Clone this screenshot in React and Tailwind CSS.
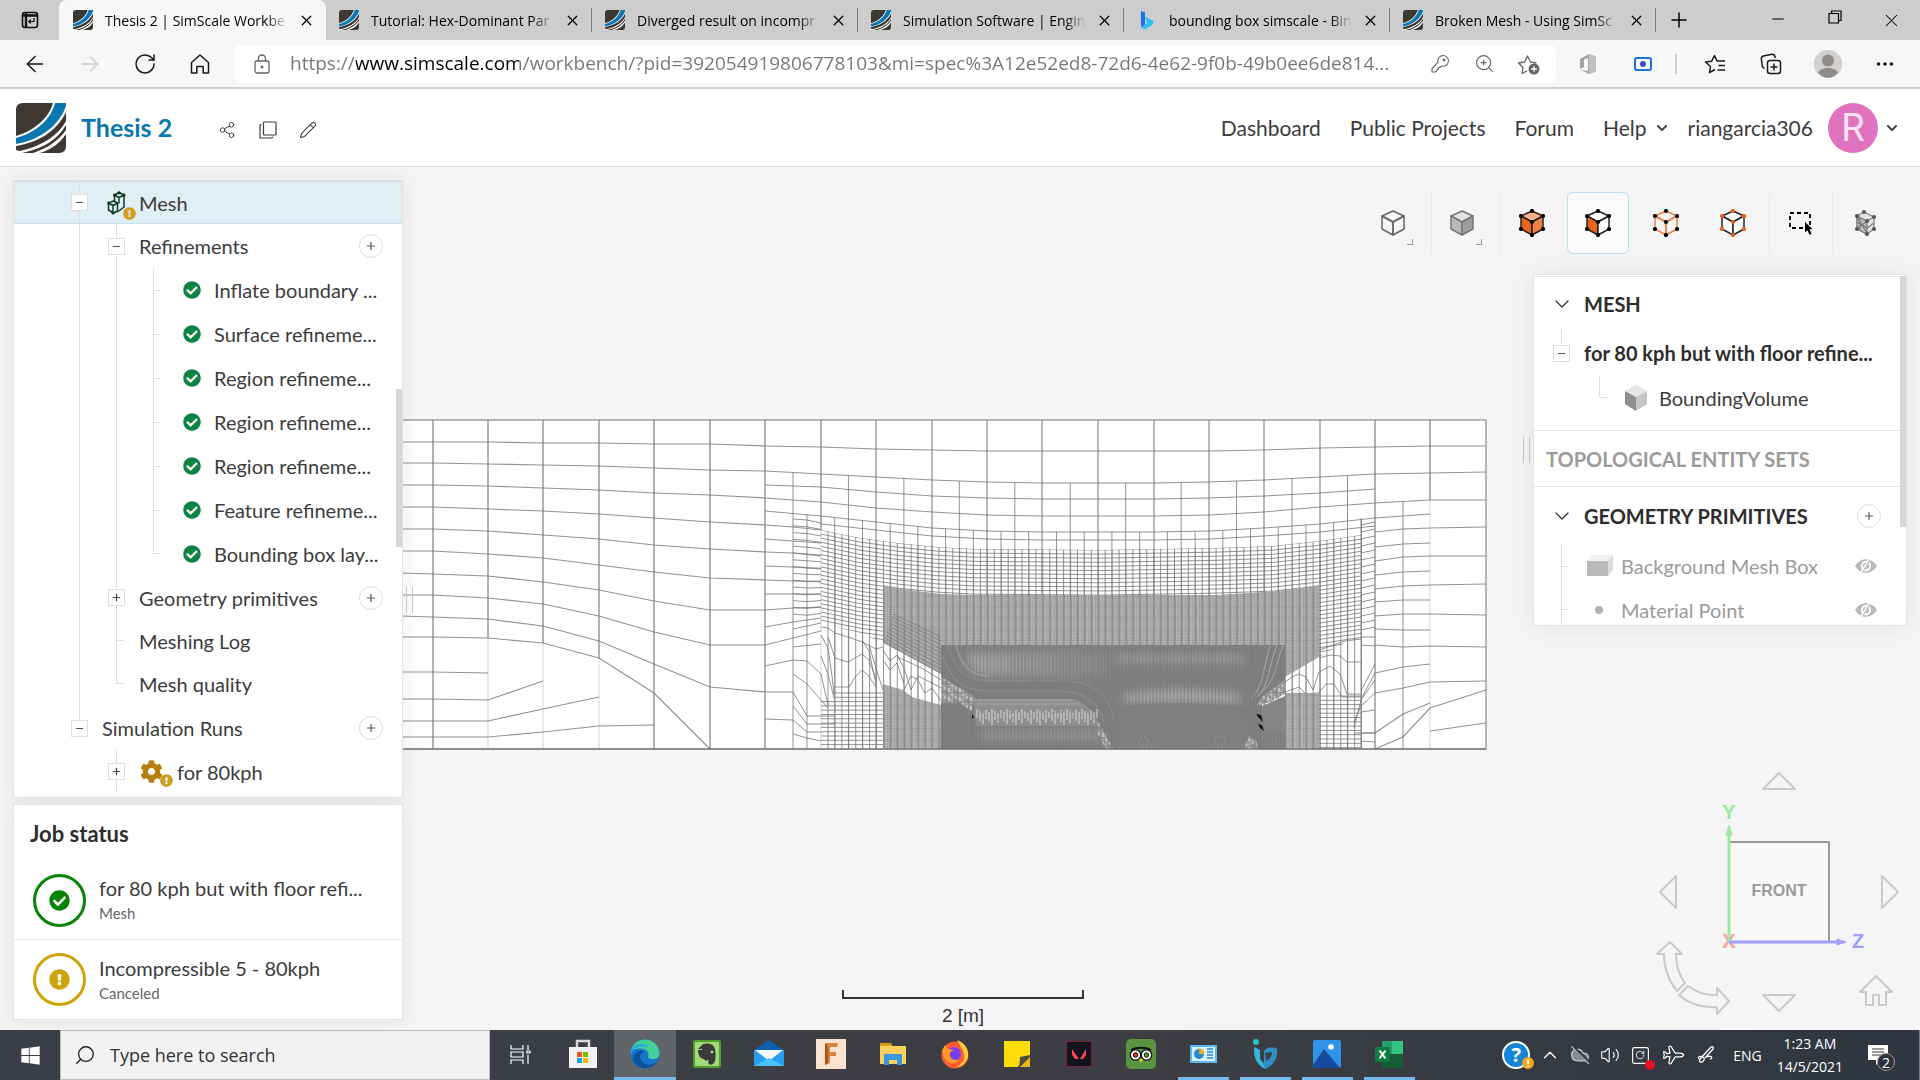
import React from 'react';
import {
    ArrowLeft, ArrowRight, RotateCw, X, Plus, Minus, ZoomIn, Square, Pencil, Share2,
    ChevronDown, ChevronUp, Ellipsis, Plane, Search, Volume2, CloudOff,
} from 'lucide-react';
import { FaCog, FaCheckCircle, FaExclamationCircle, FaWindows, FaChevronDown } from 'react-icons/fa';

/* ---------- Shared logo ---------- */

const SimScaleLogo = ({ className }) => (
    <svg viewBox="0 0 50 50" preserveAspectRatio="none" className={className} aria-hidden="true">
        <path d="M7 0H50V43Q50 50 43 50H0V7Q0 0 7 0Z" fill="#fff" />
        <path d="M7 0H37C33 14 20 27 0 33V7Q0 0 7 0Z" fill="#3e3833" />
        <path d="M39 0H50V3C44 21 25 37 0 41V35C21 29 35 16 39 0Z" fill="#0a78b0" />
        <path d="M50 9V18C42 33 24 44 3 48L0 47V43C23 39 41 28 50 9Z" fill="#3e3833" />
        <path d="M50 22V27C42 38 32 45 17 50H6C24 46 40 39 50 22Z" fill="#3e3833" />
        <path d="M50 31V43Q50 50 43 50H24C36 46 43 41 50 31Z" fill="#3e3833" />
    </svg>
);

const BingLogo = () => (
    <svg viewBox="0 0 20 20" className="h-5 w-5 shrink-0" aria-hidden="true">
        <path d="M4 1l4 1.500v12l-4 3z" fill="#1b6ff2" />
        <path d="M8 7l8 3.500c1 3-1 5-3 6l-5 3-4-2 6-4z" fill="#2cc0f5" />
    </svg>
);

/* ---------- Browser ---------- */

const TABS = [
    { title: 'Thesis 2 | SimScale Workbe', active: true },
    { title: 'Tutorial: Hex-Dominant Par' },
    { title: 'Diverged result on incompr' },
    { title: 'Simulation Software | Engin' },
    { title: 'bounding box simscale - Bin', bing: true },
    { title: 'Broken Mesh - Using SimSc' },
];

const Tab = ({ title, active, bing }) => (
    <div className={active
        ? 'flex h-10 w-[267px] items-center rounded-t-lg bg-[#f7f7f7] pr-2 pl-[14px]'
        : 'flex h-10 w-[266px] items-center pl-[13px]'}>
        {bing ? <BingLogo /> : <SimScaleLogo className="h-5 w-5 shrink-0" />}
        <span className="ml-3 w-[187px] overflow-hidden text-[14px] whitespace-nowrap text-black [mask-image:linear-gradient(90deg,#000_86%,transparent_98%)]">{title}</span>
        <button aria-label="Close tab" className="ml-1 flex w-5 shrink-0 justify-center"><X size={17} strokeWidth={1.8} /></button>
        {!active && <span className="ml-auto h-6 w-px bg-[#7d7d7d]" />}
    </div>
);

const TabBar = () => (
    <div className="flex h-10 items-center bg-[#cdcdcd]">
        <button aria-label="Tab actions" className="flex w-[59px] justify-center">
            <svg viewBox="0 0 18 18" className="h-[18px] w-[18px]" fill="none" stroke="#111" strokeWidth="1.600">
                <rect x="1.500" y="1.500" width="15" height="15" rx="2.500" />
                <path d="M2 4.500h14M5 2v14" strokeWidth="2.400" />
                <path d="M13 7v3.500H8M9.800 8.500l-2 2 2 2" strokeWidth="1.200" />
            </svg>
        </button>
        {TABS.map((t) => <Tab key={t.title} {...t} />)}
        <button aria-label="New tab" className="ml-[11px]"><Plus size={24} strokeWidth={1.5} /></button>
        <div className="ml-auto flex">
            <button aria-label="Minimize" className="flex w-[57px] justify-center"><Minus size={18} strokeWidth={1.5} /></button>
            <button aria-label="Restore" className="flex w-[57px] justify-center">
                <svg viewBox="0 0 14 14" className="h-[14px] w-[14px]" fill="none" stroke="#000" strokeWidth="1.200">
                    <path d="M1 3.500h9.500V13H1zM3.500 3.500V1H13v9.500h-2.500" />
                </svg>
            </button>
            <button aria-label="Close" className="flex w-[57px] justify-center"><X size={21} strokeWidth={1.2} /></button>
        </div>
    </div>
);

const AddressBar = () => (
    <div className="flex h-[49px] items-center border-b-2 border-[#cfcfcf] bg-[#f7f7f7] pr-2 pl-[7px] text-[#1a1a1a]">
        <button aria-label="Back" className="flex w-[55px] justify-center"><ArrowLeft size={26} strokeWidth={1.4} /></button>
        <button aria-label="Forward" className="flex w-[55px] justify-center text-[#cfcfcf]"><ArrowRight size={26} strokeWidth={1.4} /></button>
        <button aria-label="Refresh" className="flex w-[55px] justify-center"><RotateCw size={24} strokeWidth={1.5} /></button>
        <button aria-label="Home" className="flex w-[55px] justify-center">
            <svg viewBox="0 0 20 20" className="h-5 w-5" fill="none" stroke="currentColor" strokeWidth="1.500" strokeLinejoin="round">
                <path d="M1.500 8.500L10 1l8.500 7.500V19h-5.300v-6.500H6.800V19H1.500z" />
            </svg>
        </button>
        <div className="ml-2 flex h-[38px] min-w-0 flex-1 items-center rounded-md bg-white pl-[19px] text-[#666]">
            <svg viewBox="0 0 16 20" className="h-5 w-4 shrink-0" fill="none" stroke="currentColor" strokeWidth="1.300">
                <rect x="1" y="7" width="14" height="12" rx="2" />
                <path d="M4.500 7V4.500a3.500 3.500 0 017 0V7" />
                <circle cx="8" cy="13" r=".8" fill="currentColor" />
            </svg>
            <input
                aria-label="Address"
                className="ml-5 min-w-0 flex-1 bg-[linear-gradient(90deg,#767676_66px,#000_66px,#000_229px,#767676_229px)] bg-clip-text text-[19px] text-transparent outline-none"
                defaultValue="https://www.simscale.com/workbench/?pid=392054919806778103&mi=spec%3A12e52ed8-72d6-4e62-9f0b-49b0ee6de814..."
            />
            <button aria-label="Saved passwords" className="flex w-[44px] justify-center">
                <svg viewBox="0 0 18 18" className="h-[18px] w-[18px]" fill="none" stroke="currentColor" strokeWidth="1.100" strokeLinejoin="round">
                    <path d="M7 7.200A5.300 5.300 0 1110.800 11L9 12.500H7.500V14H6v1.500L4.500 17H1v-3.500z" />
                    <circle cx="13" cy="5" r="1" />
                </svg>
            </button>
            <button aria-label="Zoom" className="flex w-[44px] justify-center"><ZoomIn size={21} strokeWidth={1.3} /></button>
            <button aria-label="Add to favorites" className="flex w-[46px] justify-center">
                <svg viewBox="0 0 24 24" className="h-6 w-6" fill="none" stroke="currentColor" strokeWidth="1.300" strokeLinejoin="round">
                    <path d="M10 19l-5 2.500 1-6-4.500-4.500 6.200-1L10.500 4l3 6 6 1" />
                    <circle cx="17" cy="17" r="5.500" fill="#666" stroke="none" />
                    <path d="M17 14.200v5.600M14.200 17h5.600" stroke="#fff" />
                </svg>
            </button>
            <span className="w-1" />
        </div>
        <button aria-label="Office" className="ml-1 flex w-[55px] justify-center">
            <svg viewBox="0 0 18 22" className="h-[22px] w-[18px]">
                <path d="M1 6l9-5 7 2.500v15L10 21l-8-4 7 1V5L5 6.500V14l-4 2z" fill="#a3a3a3" />
                <path d="M10 1l7 2.500v15L10 21z" fill="#c0c0c0" />
            </svg>
        </button>
        <button aria-label="Extension" className="flex w-[55px] justify-center">
            <span className="flex h-[14px] w-[18px] items-center justify-center rounded-[3px] border-2 border-[#1473e6] bg-white"><span className="h-[6px] w-[6px] rounded-full bg-[#3550d8]" /></span>
        </button>
        <span className="mr-[9px] ml-[5px] h-5 w-[2px] bg-[#cfcfcf]" />
        <button aria-label="Favorites" className="flex w-[57px] justify-center">
            <svg viewBox="0 0 22 20" className="h-5 w-[22px]" fill="none" stroke="currentColor" strokeWidth="1.500" strokeLinejoin="round">
                <path d="M11 15.500l-5.500 3 1-6L1.500 8l6.200-.8L10.500 1.500 13 7h8M14.500 11.500H21M13.500 16H21" />
            </svg>
        </button>
        <button aria-label="Collections" className="flex w-[55px] justify-center">
            <svg viewBox="0 0 22 22" className="h-[22px] w-[22px]" fill="none" stroke="currentColor" strokeWidth="1.500">
                <rect x="7.500" y="7.500" width="13" height="13" rx="2.500" />
                <path d="M14 10.500v7M10.500 14h7M4.500 15.500L2.500 14 1.300 6A3 3 0 013.500 3L12 1.300A3 3 0 0115 3.500l.3 1.500" />
            </svg>
        </button>
        <button aria-label="Profile" className="flex w-[60px] justify-center">
            <svg viewBox="0 0 28 28" className="h-7 w-7">
                <circle cx="14" cy="14" r="14" fill="#d2d0ce" />
                <circle cx="14" cy="10.500" r="6" fill="#8f8b88" />
                <path d="M4 22.500c3-6 17-6 20 0-5 7-15 7-20 0z" fill="#8f8b88" />
            </svg>
        </button>
        <button aria-label="Settings and more" className="flex w-[54px] justify-center"><Ellipsis size={22} /></button>
    </div>
);

/* ---------- Application header ---------- */

const AppHeader = () => (
    <header className="flex h-[78px] items-center border-b border-[#e2e2e2] bg-white pr-[22px] pl-4 text-[21px] text-[#3c3c3c]">
        <SimScaleLogo className="h-[50px] w-[50px]" />
        <h1 className="ml-[15px] w-[127px] text-[25px] font-bold text-[#0877b0]">Thesis 2</h1>
        <div className="mt-1 flex items-center">
            <button aria-label="Share" className="ml-[10px] flex w-[41px] justify-start"><Share2 size={18} strokeWidth={1.3} /></button>
            <button aria-label="Duplicate" className="flex w-[40px] justify-start">
                <svg viewBox="0 0 18 18" className="h-[18px] w-[18px]" fill="none" stroke="currentColor" strokeWidth="1.200">
                    <rect x="4.500" y="1" width="12.500" height="13" rx="1" />
                    <path d="M2.500 3.500L1 4v13h11.500l1.500-1" />
                </svg>
            </button>
            <button aria-label="Rename"><Pencil size={18} strokeWidth={1.4} /></button>
        </div>
        <nav className="ml-auto flex items-center">
            <a href="#dashboard">Dashboard</a>
            <a href="#projects" className="ml-[29px]">Public Projects</a>
            <a href="#forum" className="ml-[29px]">Forum</a>
            <button className="ml-[29px] flex items-center gap-[9px]">Help <FaChevronDown size={12} /></button>
            <button className="ml-5 flex items-center">
                riangarcia306
                <span className="mr-2 ml-[15px] flex h-[50px] w-[50px] items-center justify-center rounded-full bg-[#e072bf] font-['Roboto',sans-serif] text-[38px] leading-none text-[#fbe3f4]">R</span>
                <FaChevronDown size={12} />
            </button>
        </nav>
    </header>
);

/* ---------- Tree panel ---------- */

// Line types of a tree cell: 'full' runs through, 'tick' adds a stub, 'end' stops at the stub
const TreeCell = ({ line, toggle, children }) => (
    <div className="grid h-full w-[37px] shrink-0 place-items-center">
        {line === 'full' && <span className="h-full w-px bg-[#dcdfe0] [grid-area:1/1]" />}
        {line === 'tick' && (
            <span className="flex h-full w-px items-center bg-[#dcdfe0] [grid-area:1/1]"><span className="ml-px h-px w-[7px] shrink-0 bg-[#dcdfe0]" /></span>
        )}
        {line === 'end' && (
            <span className="h-1/2 w-px self-start bg-[#dcdfe0] [grid-area:1/1]"><span className="flex h-full w-2 items-end"><span className="h-px w-2 bg-[#dcdfe0]" /></span></span>
        )}
        {line === 'top' && <span className="h-1/2 w-px self-start bg-[#dcdfe0] [grid-area:1/1]" />}
        {toggle && (
            <button aria-label={toggle === '+' ? 'Expand' : 'Collapse'} className="flex h-[17px] w-[17px] items-center justify-center border border-[#dcdfe0] bg-white text-[#444] [grid-area:1/1]">
                {toggle === '+' ? <Plus size={11} strokeWidth={2.6} /> : <Minus size={11} strokeWidth={2} />}
            </button>
        )}
        {children}
    </div>
);

const AddButton = ({ label }) => (
    <button aria-label={label} className="mr-[19px] ml-auto flex h-6 w-6 items-center justify-center rounded-full border border-[#d9dfe2] text-[#4d5a60]">
        <Plus size={12} strokeWidth={2.4} />
    </button>
);

const MeshIcon = () => (
    <span className="relative [grid-area:1/1]">
        <svg viewBox="0 0 20 24" className="h-6 w-5" fill="none" stroke="#0d3b22" strokeWidth="1.500" strokeLinejoin="round">
            <path d="M1.500 12l5-2 4 2v8l-4 2-5-3zM1.500 12l4.500 2.500 4.500-2.500M6 14.500V22M7.500 10V4L12 1.500 17 4v12l-6.500 5M7.500 4l4.500 2.500L17 4M12 6.500v6" />
            <g fill="#0d3b22" stroke="none"><circle cx="12" cy="1.800" r="1.600" /><circle cx="17" cy="4" r="1.600" /><circle cx="1.700" cy="12" r="1.600" /><circle cx="6" cy="22" r="1.600" /><circle cx="7.500" cy="4" r="1.600" /></g>
        </svg>
        <FaExclamationCircle className="absolute top-4 left-4 text-[#cf9f22]" size={13} />
    </span>
);

const REFINEMENTS = [
    'Inflate boundary ...',
    'Surface refineme...',
    'Region refineme...',
    'Region refineme...',
    'Region refineme...',
    'Feature refineme...',
    'Bounding box lay...',
];

const TreePanel = () => (
    <section className="flex h-[618px] overflow-hidden border border-[#e3e3e3] bg-white text-[20px] shadow-[0_0_20px_rgba(0,0,0,0.08)]">
        <div className="flex min-w-0 flex-1 flex-col">
            <div className="flex h-[43px] shrink-0 items-center border-y border-[#c3e0ec] bg-[#e0eef5] pl-[47px]">
                <TreeCell line="full" toggle="-" />
                <TreeCell><MeshIcon /></TreeCell>
                <span className="ml-1">Mesh</span>
            </div>
            <div className="flex h-11 shrink-0 items-center pl-[47px]">
                <TreeCell line="full" />
                <TreeCell line="full" toggle="-" />
                <span className="ml-1">Refinements</span>
                <AddButton label="Add refinement" />
            </div>
            {REFINEMENTS.map((name, i) => (
                <div key={i} className="flex h-11 shrink-0 items-center pl-[47px] last-of-type:h-[43px]">
                    <TreeCell line="full" />
                    <TreeCell line="full" />
                    <TreeCell line={i === REFINEMENTS.length - 1 ? 'end' : 'tick'} />
                    <FaCheckCircle size={18} className="ml-[11px] shrink-0 text-[#0b8442]" />
                    <span className="ml-[13px] whitespace-nowrap">{name}</span>
                </div>
            ))}
            <div className="flex h-[43px] shrink-0 items-center pl-[47px]">
                <TreeCell line="full" />
                <TreeCell line="full" toggle="+" />
                <span className="ml-1">Geometry primitives</span>
                <AddButton label="Add geometry primitive" />
            </div>
            <div className="flex h-[43px] shrink-0 items-center pl-[47px]">
                <TreeCell line="full" />
                <TreeCell line="tick" />
                <span className="ml-1">Meshing Log</span>
            </div>
            <div className="flex h-11 shrink-0 items-center pl-[47px]">
                <TreeCell line="full" />
                <TreeCell line="end" />
                <span className="ml-1">Mesh quality</span>
            </div>
            <div className="flex h-11 shrink-0 items-center pl-[47px]">
                <TreeCell line="top" toggle="-" />
                <span className="ml-1">Simulation Runs</span>
                <AddButton label="Add simulation run" />
            </div>
            <div className="flex h-[43px] shrink-0 items-center pl-[47px]">
                <TreeCell />
                <TreeCell line="full" toggle="+" />
                <span className="relative ml-[5px] w-[37px]">
                    <FaCog size={23} className="text-[#b57f0e]" />
                    <FaExclamationCircle className="absolute top-[14px] left-5 text-[#cf9f22]" size={13} />
                </span>
                <span>for 80kph</span>
            </div>
        </div>
        <div className="-ml-[6px] w-[6px] pt-[208px]"><div className="h-[158px] bg-[#d6d6d6]" /></div>
    </section>
);

const JOBS = [
    { name: 'for 80 kph but with floor refi...', type: 'Mesh', ok: true },
    { name: 'Incompressible 5 - 80kph', type: 'Canceled', ok: false },
];

const JobStatus = () => (
    <section className="border border-[#e3e3e3] bg-white shadow-[0_0_20px_rgba(0,0,0,0.08)]">
        <h2 className="flex h-14 items-center pl-4 text-[22px] font-bold text-[#2d2d2d]">Job status</h2>
        {JOBS.map((job) => (
            <div key={job.name} className="flex h-[79px] items-center border-b border-[#e6ebed] pl-[19px] last:border-0">
                <span className={job.ok
                    ? 'flex h-[53px] w-[53px] shrink-0 items-center justify-center rounded-full border-[3px] border-[#078407] text-[#078407]'
                    : 'flex h-[53px] w-[53px] shrink-0 items-center justify-center rounded-full border-[3px] border-[#cfa40a] text-[#cfa40a]'}>
                    {job.ok ? <FaCheckCircle size={21} /> : <FaExclamationCircle size={21} />}
                </span>
                <span className="ml-[13px] whitespace-nowrap">
                    <span className="block text-[20px] leading-[26px]">{job.name}</span>
                    <span className="block text-[15px] leading-6 text-[#666]">{job.type}</span>
                </span>
            </div>
        ))}
    </section>
);

/* ---------- View toolbar ---------- */

const CORNERS = [[13, 2], [24, 7], [24, 20], [13, 26], [2, 20], [2, 7], [13, 13]];

const CubeIcon = ({ top = 'none', left = 'none', right = 'none', stroke = '#222', dot }) => (
    <svg viewBox="0 0 26 28" className="h-7 w-[26px]" stroke={stroke} strokeWidth="1.500" strokeLinejoin="round">
        <path d="M13 2L24 7L13 13L2 7Z" fill={top} />
        <path d="M2 7L13 13V26L2 20Z" fill={left} />
        <path d="M24 7L13 13V26L24 20Z" fill={right} />
        {dot && CORNERS.map(([x, y]) => <circle key={`${x}-${y}`} cx={x} cy={y} r="2.100" fill={dot} stroke="none" />)}
    </svg>
);

const CornerMark = () => <span className="absolute right-0 bottom-0 h-[6px] w-[6px] border-r border-b border-[#999]" />;

const ToolDivider = () => <span className="h-[60px] w-px bg-[#e9e9e9]" />;

const ViewToolbar = () => (
    <div className="flex items-center self-end pr-[10px]">
        <button aria-label="Wireframe" className="relative mr-[18px] flex h-[44px] w-[41px] items-center justify-center">
            <CubeIcon stroke="#666" /><CornerMark />
        </button>
        <ToolDivider />
        <button aria-label="Shaded" className="relative mr-[18px] ml-[9px] flex h-[44px] w-[41px] items-center justify-center">
            <CubeIcon top="#e4e4e4" left="#b9b9b9" right="#9d9d9d" stroke="#777" /><CornerMark />
        </button>
        <ToolDivider />
        <button aria-label="Select volumes" className="mr-1 flex h-[62px] w-[62px] items-center justify-center"><CubeIcon top="#fbb088" left="#e8641c" right="#f08046" dot="#000" /></button>
        <button aria-label="Select faces" className="flex h-[62px] w-[62px] items-center justify-center rounded-md border border-[#b9dff3] bg-[#fbfbfb]"><CubeIcon top="#fff" left="#e8641c" right="#fff" dot="#000" /></button>
        <button aria-label="Select edges" className="flex h-[62px] w-[74px] items-center justify-center"><CubeIcon stroke="#ee7f4b" dot="#000" /></button>
        <button aria-label="Select vertices" className="mr-[6px] flex h-[62px] w-[60px] items-center justify-center"><CubeIcon top="#fff" left="#fff" right="#fff" dot="#ec5f17" /></button>
        <ToolDivider />
        <button aria-label="Box selection" className="flex h-[62px] w-[62px] items-center justify-center">
            <svg viewBox="0 0 26 26" className="h-[26px] w-[26px]">
                <path d="M2 3h20v15H2z" fill="none" stroke="#000" strokeWidth="1.800" strokeDasharray="4 3" />
                <path d="M17 12l7.500 7-3 .300 2 4.500-2 1-2-4.500-2.500 2z" />
            </svg>
        </button>
        <ToolDivider />
        <button aria-label="Mesh clip" className="flex h-[62px] w-[64px] items-center justify-center">
            <svg viewBox="0 0 26 28" className="h-7 w-[26px]" stroke="#777" strokeWidth="1.100">
                <path d="M5 7l7-4 10 5v12l-7 5L5 20z" fill="#e2e2e2" />
                <path d="M5 7l10 5v13L5 20z" fill="#bdbdbd" />
                <path d="M15 12l7-4M5 13l10 6 7-5M8 8v14M5 20l10-8M5 8l10 16" fill="none" />
                {[[5, 7], [12, 3], [22, 8], [22, 20], [15, 25], [5, 20], [15, 12]].map(([x, y]) => (
                    <circle key={`${x}-${y}`} cx={x} cy={y} r="2.100" fill="#555" stroke="none" />
                ))}
            </svg>
        </button>
    </div>
);

/* ---------- Scene tree ---------- */

const HiddenEye = ({ label }) => (
    <button aria-label={label} className="mr-[23px] ml-auto">
        <svg viewBox="0 0 22 16" className="h-4 w-[22px]">
            <path d="M0 8C5-1 17-1 22 8C17 17 5 17 0 8Z" fill="#b9b9b9" />
            <circle cx="11" cy="8" r="5.200" fill="#fff" />
            <circle cx="11" cy="8" r="3.300" fill="#b9b9b9" />
            <path d="M6.500 15L15 1" stroke="#fff" strokeWidth="3" />
            <path d="M7.500 14.500L15 2" stroke="#b9b9b9" strokeWidth="1.300" />
        </svg>
    </button>
);

const ScenePanel = () => (
    <section className="flex h-[352px] w-[374px] self-end overflow-hidden border border-[#e3e3e3] bg-white pt-px text-[20px] shadow-[0_0_24px_rgba(0,0,0,0.08)]">
        <div className="flex min-w-0 flex-1 flex-col">
            <h2 className="flex h-[54px] shrink-0 items-center border-t border-[#ececec] font-bold text-[#2d2d2d]">
                <ChevronDown size={24} strokeWidth={1.2} className="mr-[10px] ml-4" />MESH
            </h2>
            <div className="flex h-[46px] shrink-0 items-center pl-[9px] font-bold text-[#2d2d2d]">
                <TreeCell line="top" toggle="-" />
                <span className="ml-1 whitespace-nowrap">for 80 kph but with floor refine...</span>
            </div>
            <div className="mb-[10px] flex h-11 shrink-0 items-center pl-[47px]">
                <TreeCell line="end" />
                <svg viewBox="0 0 22 26" className="ml-[7px] h-[26px] w-[22px]">
                    <path d="M11 0L22 6L11 12L0 6Z" fill="#e6e6e6" />
                    <path d="M0 6L11 12V26L0 19Z" fill="#8f8f8d" />
                    <path d="M22 6L11 12V26L22 19Z" fill="#c6c6c6" />
                </svg>
                <span className="ml-3">BoundingVolume</span>
            </div>
            <h2 className="flex h-[57px] shrink-0 items-center border-y border-[#e3e3e3] pl-3 font-bold text-[#9b9b9b]">TOPOLOGICAL ENTITY SETS</h2>
            <h2 className="flex h-[57px] shrink-0 items-center font-bold text-[#2d2d2d]">
                <ChevronDown size={24} strokeWidth={1.2} className="mr-[10px] ml-4" />GEOMETRY PRIMITIVES
                <AddButton label="Add geometry primitive" />
            </h2>
            <div className="flex h-11 shrink-0 items-center pl-[9px] text-[#9b9b9b]">
                <TreeCell line="tick" />
                <svg viewBox="0 0 26 22" className="ml-[7px] h-[22px] w-[26px]">
                    <path d="M0 6L5 0H26L21 6Z" fill="#f0f0f0" />
                    <path d="M21 6L26 0V15L21 21Z" fill="#dcdcdc" />
                    <path d="M0 6H21V21H0Z" fill="#b9b9b9" />
                </svg>
                <span className="ml-2">Background Mesh Box</span>
                <HiddenEye label="Show Background Mesh Box" />
            </div>
            <div className="flex h-[43px] shrink-0 items-center pl-[9px] text-[#9b9b9b]">
                <TreeCell line="tick" />
                <span className="mr-[18px] ml-[15px] h-2 w-2 rounded-full bg-[#b0b0b0]" />
                <span>Material Point</span>
                <HiddenEye label="Show Material Point" />
            </div>
        </div>
        <div className="w-[6px]"><div className="h-[251px] bg-[#d6d6d6]" /></div>
    </section>
);

/* ---------- Orientation cube ---------- */

const OrientationCube = () => (
    <svg viewBox="0 0 247 260" className="h-[260px] w-[247px] self-end overflow-visible" fill="none" stroke="#c9c9c9" strokeWidth="2" strokeLinejoin="round">
        <path d="M119 3L135 19H103ZM119 241L135 225H103ZM0 122L16 106V138ZM238 122L222 106V138Z" />
        <path d="M10 172L22 184H16C16 196 19 205 25 213L17 221C8 210 4 198 4 184H-3Z" />
        <path d="M28 216C37 223 45 225 57 225V218L69 231L57 244V237C43 238 29 234 19 225Z" />
        <path d="M216 206L232 222H226V235H219V225H213V235H206V222H200Z" />
        <rect x="69" y="72" width="100" height="100" fill="#f9f9f9" stroke="#9a9a9a" />
        <text x="69" y="178" textAnchor="middle" fontSize="20" fontWeight="bold" fill="#ff9d9d" stroke="none" fontFamily="Liberation Sans, sans-serif">X</text>
        <path d="M69 172V62" stroke="#9be89b" strokeWidth="3" />
        <path d="M69 55L72 65H66Z" fill="#9be89b" stroke="#9be89b" strokeWidth="1" />
        <path d="M69 172H178" stroke="#a0a0fb" strokeWidth="3" />
        <path d="M186 172L177 169V175Z" fill="#a0a0fb" stroke="#a0a0fb" strokeWidth="1" />
        <g fontFamily="Liberation Sans, sans-serif" stroke="none" fontWeight="bold" textAnchor="middle">
            <text x="69" y="49" fontSize="20" fill="#9be89b">Y</text>
            <text x="198" y="178" fontSize="20" fill="#a0a0fb">Z</text>
            <text x="119" y="126" fontSize="16" fill="#9a9a9a">FRONT</text>
        </g>
    </svg>
);

/* ---------- Mesh drawing ---------- */

const LEFT_X = [400, 433, 488, 543, 599, 654, 710, 765];
const MID_X = [821, 876, 932, 987, 1042, 1098, 1154, 1209, 1264, 1320, 1375];

const path = (pts) => `M${pts.map((p) => p.join(' ')).join('L')}`;
const zip = (xs, ys) => xs.slice(0, ys.length).map((x, i) => [x, ys[i]]);

// Height of a polyline at a given x
const at = (pts, x) => {
    if (x <= pts[0][0]) return pts[0][1];
    for (let i = 1; i < pts.length; i++) {
        const [x0, y0] = pts[i - 1];
        const [x1, y1] = pts[i];
        if (x <= x1) return y0 + ((y1 - y0) * (x - x0)) / (x1 - x0);
    }
    return pts[pts.length - 1][1];
};

const LEFT_ROWS = [
    [442, 442, 442, 443, 443, 444, 444, 446],
    [463, 463, 464, 465, 466, 468, 470, 471],
    [485, 485, 486, 488, 490, 493, 495, 498],
    [507, 507, 509, 511, 514, 518, 522, 525],
    [529, 529, 531, 535, 539, 545, 549, 552],
    [551, 551, 554, 558, 565, 572, 578, 580],
    [573, 574, 576, 582, 590, 601, 610, 610],
    [595, 595, 598, 604, 616, 632, 645, 645],
    [616, 617, 619, 626, 641, 664, 687, 692],
    [637, 637, 638, 643, 658, 693, 749],
    [672, 672, 673],
    [699, 699, 700, 681],
    [721, 721, 721, 709, 697],
    [737, 737, 737, 732, 726, 725],
];

const ROW_1 = zip([765, ...MID_X, 1430, 1486], [446, 447, 449, 450, 451, 451, 451, 451, 451, 450, 448, 447, 446, 446]);
const ROW_2 = zip([765, ...MID_X, 1430, 1486], [471, 474, 477, 480, 482, 483, 483, 483, 482, 480, 477, 474, 473, 472]);
const ROW_25 = zip([765, ...MID_X], [485, 487, 492, 496, 498, 499, 499, 499, 498, 496, 493, 489]);
const ROW_3 = zip([765, ...MID_X, 1430, 1486], [498, 502, 508, 512, 515, 516, 516, 516, 515, 512, 507, 503, 500, 500]);
const ROW_35 = zip([765, ...MID_X, 1430], [511, 516, 522, 528, 531, 532, 532, 532, 531, 528, 524, 518, 514]);
const FINE_TOP = [[821, 530], [860, 538], [897, 543], [937, 547], [973, 549], [1100, 550], [1217, 548], [1273, 546], [1320, 541], [1361, 535]];
const DENSE_TOP = [[883, 585], [910, 590], [940, 594], [973, 595], [1217, 595], [1250, 593], [1287, 590], [1319, 585]];
const LOW_LEFT = [[821, 623], [860, 633], [883, 643], [910, 657], [941, 674]];
const LOW_RIGHT = [[1285, 677], [1319, 657], [1347, 642], [1361, 638]];

// Rows to the right of the fine region, at x = 1375, 1403, 1430 and for whole rows 1486
const RIGHT_ROWS = [
    [532, 529, 528, 527], [547, 544, 543], [561, 557, 556, 556], [575, 572, 571], [589, 586, 585, 584],
    [602, 600, 600], [616, 614, 614, 615], [629, 630, 630], [645, 647, 646, 647], [673, 667, 664],
    [693, 688, 682, 681], [733, 714, 703], [749, 737, 708, 690],
];

const STRAY = [
    [[765, 539], [793, 541], [821, 543]],
    [[765, 525], [793, 527], [821, 530]],
    [[765, 552], [793, 553], [821, 556]],
    [[765, 566], [793, 567], [821, 569]],
    [[765, 580], [793, 581], [821, 582]],
    [[765, 594], [793, 594], [821, 594]],
    [[765, 610], [793, 608], [821, 607]],
    [[765, 627], [793, 622], [821, 618]],
    [[765, 645], [793, 638], [821, 631]],
    [[765, 666], [793, 660], [807, 661], [821, 674], [828, 705]],
    [[765, 692], [793, 692], [807, 716], [821, 716]],
    [[765, 719], [793, 720], [807, 732], [821, 732]],
    [[793, 629], [821, 623]], [[793, 647], [821, 644]],
    [[793, 674], [807, 684], [828, 708]],
    [[793, 706], [807, 724], [821, 724]],
    [[793, 734], [807, 738], [821, 741]],
    [[821, 627], [828, 628], [835, 633], [848, 637], [862, 642], [876, 649], [883, 647]],
    [[828, 637], [835, 658], [848, 662], [862, 654], [869, 660], [876, 679]],
    [[835, 687], [849, 687], [855, 677], [862, 670], [868, 675], [876, 687]],
    [[821, 635], [828, 648], [832, 676], [834, 694]],
    [[821, 656], [828, 674], [834, 698]],
    [[862, 640], [869, 651], [876, 684]], [[869, 645], [876, 668], [883, 690]],
    [[883, 650], [890, 661], [897, 655], [904, 668], [911, 690], [918, 676], [932, 683], [941, 688]],
    [[883, 660], [890, 670], [897, 663], [904, 684]],
    [[897, 657], [911, 663], [925, 670], [941, 680]],
    [[904, 690], [911, 676], [918, 680], [925, 693], [932, 688], [941, 701]],
    [[1285, 682], [1292, 677], [1299, 674], [1306, 677], [1313, 690], [1319, 672], [1330, 666], [1340, 674], [1347, 694], [1361, 694]],
    [[1285, 692], [1299, 687], [1306, 694], [1319, 693], [1326, 684], [1334, 684], [1342, 697], [1361, 697]],
    [[1319, 658], [1330, 655], [1340, 656], [1347, 662], [1361, 662]],
    [[1319, 650], [1345, 641], [1361, 639]],
    [[1361, 645], [1375, 646]], [[1361, 637], [1375, 637]],
    [[1361, 691], [1375, 664]], [[1361, 699], [1375, 673]], [[1354, 722], [1361, 706], [1375, 693]],
    [[1361, 712], [1375, 710]], [[1354, 733], [1375, 733]], [[1361, 741], [1375, 742]],
    [[1354, 728], [1361, 700], [1375, 680]],
    [[1430, 731], [1486, 723]],
];

const range = (from, to, step) => {
    const out = [];
    for (let v = from; v <= to; v += step) out.push(v);
    return out;
};

const MeshView = () => (
    <svg viewBox="0 167 1920 863" className="absolute inset-0 h-full w-full" fill="none" stroke="#6f6f6f" strokeOpacity="0.750" aria-label="Mesh cross section">
        <defs>
            <pattern id="dense" width="6.930" height="2.200" patternUnits="userSpaceOnUse" x="883">
                <rect width="7" height="3" fill="#b9b9b9" />
                <path d="M0 .5H7" stroke="#a6a6a6" strokeWidth=".8" />
                <path d="M1 0V3" stroke="#777" strokeWidth="1.200" />
                <path d="M4.500 0V3" stroke="#999" />
            </pattern>
            <pattern id="stripes" width="3.460" height="8" patternUnits="userSpaceOnUse">
                <path d="M1 0V8" stroke="#757575" strokeWidth="1.300" />
            </pattern>
            <pattern id="speckle" width="11" height="9" patternUnits="userSpaceOnUse">
                <rect width="11" height="9" fill="#a9a9a9" />
                <path d="M1 0V9M5 0V6M8 2V9M2 3H5M7 7H11" stroke="#7d7d7d" strokeWidth="1" />
                <path d="M3 4V8M6 0V3M10 3V6" stroke="#ededed" />
            </pattern>
            <linearGradient id="cabin" x1="0" x2="1" y1="0" y2="0">
                <stop offset="0" stopColor="#a4a4a4" />
                <stop offset="1" stopColor="#888" />
            </linearGradient>
            <filter id="soft"><feGaussianBlur stdDeviation="4" /></filter>
            <clipPath id="fine">
                <path d={`${path([...FINE_TOP, ...[...LOW_RIGHT].reverse(), ...[...LOW_LEFT].reverse()])}Z`} />
            </clipPath>
            <clipPath id="core"><path d="M941 645H1285V680L1262 700V749H941Z" /></clipPath>
        </defs>

        <rect x="395" y="420" width="1091" height="329" fill="#fff" strokeWidth="1.300" />

        {/* coarse rows and columns */}
        {LEFT_ROWS.map((ys) => <path key={ys.join()} d={path(zip(LEFT_X, ys))} strokeWidth="1.200" />)}
        {[ROW_1, ROW_2, ROW_25, ROW_3, ROW_35].map((row) => <path key={row[0][1]} d={path(row)} />)}
        <path d="M433 420V749M599 420V658M654 420V749M710 420V749M765 420V749" strokeWidth="1.400" />
        <path d="M488 420V638M543 420V643M821 420V530M1430 420V500M1375 420V749" strokeWidth="1.400" />
        <path d="M488 638V749M543 643V749M599 658V749M821 530V749M1430 500V749" strokeOpacity="0.300" />
        {MID_X.slice(1, 10).map((x) => <path key={x} d={`M${x} 420V749`} strokeWidth="1.300" />)}

        {/* refined columns, each level starts at its own row */}
        {range(793, 1350, 55.45).map((x) => <path key={x} d={`M${x} ${at(ROW_2, x)}V749`} />)}
        {range(807, 1362, 27.72).map((x) => <path key={x} d={`M${x} ${at(ROW_35, x)}V749`} />)}
        {range(828, 1361, 13.86).map((x) => <path key={x} d={`M${x} ${at(FINE_TOP, x)}V749`} />)}
        {range(835, 1355, 13.86).map((x) => <path key={x} d={`M${x} ${at(FINE_TOP, x)}V749`} strokeOpacity="0.550" />)}
        <path d="M1361 518V749M1403 501V749" />
        <path d={path(ROW_35.slice(1, 12).map(([x, y]) => [x, y + 8]))} />

        {/* level three rows at both flanks */}
        {range(519, 615, 6.8).map((y) => <path key={y} d={path([[793, y], [807, y + 1], [821, y + 4 - (y - 519) / 20]])} />)}
        {range(525, 632, 7).map((y) => <path key={y} d={path([[1361, y], [1375, y - 3]])} />)}
        {RIGHT_ROWS.map((ys) => <path key={ys.join()} d={path(zip([1375, 1403, 1430, 1486], ys))} strokeWidth="1.200" />)}

        <g clipPath="url(#fine)">
            {range(0, 28, 1).map((i) => <path key={i} d={path(FINE_TOP.map(([x, y]) => [x, y + i * 4.1]))} />)}
        </g>
        {STRAY.map((pts) => <path key={pts.join()} d={path(pts)} />)}

        {/* blocks along the floor */}
        {range(693, 746, 4.3).map((y) => <path key={y} d={`M${y < 700 ? 835 : 821} ${y}H883M1319 ${y + 3}H1361`} />)}
        <path d="M821 716H835M821 724H835M1361 733H1375" />
        <path d="M883 684L903 690L912 697L941 705V749H883Z" fill="url(#dense)" stroke="none" />
        <path d="M1285 693H1319V749H1285Z" fill="url(#dense)" stroke="none" />

        <path d={`${path([...DENSE_TOP, [1319, 657], [1285, 677], [1262, 700], [960, 700], [941, 674], [910, 657], [883, 643]])}Z`} fill="url(#dense)" stroke="none" />
        {range(0, 9, 1).map((i) => (
            <path key={i} d={`M${884 + i} ${641 - i * 3}Q${905 + i * 2} ${655 - i * 3} 941 ${673 - i * 4}`} stroke="#777" />
        ))}

        {/* refined core around the vehicle */}
        <g clipPath="url(#core)" stroke="none">
            <path d="M941 645H1285V749H941Z" fill="#808080" />
            <g filter="url(#soft)">
                <path d="M968 652H1110V676H985C972 674 964 664 968 652Z" fill="url(#cabin)" />
                <rect x="1115" y="655" width="130" height="8" rx="4" fill="#9e9e9e" />
                <path d="M1122 697C1128 688 1236 688 1242 697L1240 702H1124Z" fill="#acacac" />
                <rect x="980" y="731" width="122" height="8" fill="#989898" />
            </g>
            <path d="M941 645H1285V749H941Z" fill="url(#stripes)" fillOpacity=".75" />
            <path d="M941 645C952 678 962 684 985 685H1065C1092 687 1106 700 1110 725" fill="none" stroke="#7c7c7c" strokeWidth="8" />
            <path d="M948 645C956 673 966 680 988 681H1068C1094 683 1108 695 1114 718" fill="none" stroke="#929292" strokeWidth="1" />
            <path d="M943 655C950 682 966 690 985 691H1060C1085 692 1098 702 1104 722" fill="none" stroke="#959595" strokeWidth="1" />
            <path d="M956 645C961 666 970 675 988 676" fill="none" stroke="#a4a4a4" strokeWidth="1.500" />
            <path d="M973 699H1072C1086 702 1094 712 1100 726H976Z" fill="#8f8f8f" />
            {range(0, 40, 1).map((i) => (
                <path key={i} d={`M${977 + i * 3} ${709 + ((i * 7) % 5)}V${718 + ((i * 11) % 8)}`} stroke="#dedede" strokeWidth="1.300" />
            ))}
            {range(0, 28, 1).map((i) => <path key={i} d={`M${980 + i * 4} ${711 + ((i * 5) % 11)}h3`} stroke="#8a8a8a" />)}
            <path d="M974 700H1074M978 704H1080" stroke="#bdbdbd" strokeWidth="1" strokeDasharray="2 1" />
            <path d="M941 677L974 696L972 712L960 703H941Z" fill="url(#speckle)" />
            <path d="M1098 722L1112 746L1114 749H1106L1098 735Z" fill="url(#speckle)" />
            <path d="M1116 749C1113 730 1116 708 1130 706C1160 701 1215 703 1236 707C1248 712 1250 730 1246 749Z" fill="#7f7f7f" />
        </g>
        <path d="M1262 706L1285 696V749H1262Z" fill="#858585" stroke="none" />
        <path d="M1262 733H1285V749H1262Z" fill="url(#stripes)" stroke="none" />
        <path d="M1249 736L1256 740L1258 749H1244Z" fill="url(#speckle)" stroke="none" />
        <path d="M1285 680L1262 697L1256 706L1270 702L1285 694Z" fill="url(#speckle)" stroke="none" />
        <path d="M1256 714l5 1 2 7-4-4zM1258 724l4 1 2 6-4-3zM972 714l2 3-2 2z" fill="#111" stroke="none" />
        <g stroke="#a0a0a0">
            <circle cx="1143" cy="741" r="5" strokeDasharray="2 2" />
            <circle cx="1220" cy="741" r="5" strokeDasharray="2 2" />
            <path d="M1118 747H1160M1205 747H1245" strokeDasharray="2 2" />
        </g>
        <path d="M1252 697C1262 690 1263 670 1270 646M1257 697C1270 684 1268 668 1277 645M1262 692C1276 680 1276 664 1283 645" stroke="#b4b4b4" />
        <path d="M400 749H1486" strokeWidth="1.300" />
    </svg>
);

const PanelGrip = ({ className }) => <span className={`h-[26px] w-[7px] border-x border-[#c8c8c8] ${className}`} />;

const Workspace = () => (
    <main className="relative flex min-h-0 flex-1 overflow-hidden bg-[#f5f5f5] text-[#3c3c3c]">
        <MeshView />
        <aside className="relative ml-[13px] flex w-[390px] shrink-0 flex-col gap-[6px] pt-[13px]">
            <TreePanel />
            <JobStatus />
        </aside>
        <PanelGrip className="relative mt-[420px] ml-[3px]" />
        <div className="relative ml-[429px] flex w-[242px] shrink-0 flex-col justify-end pb-[2px]">
            <div className="h-[9px] border-x-2 border-b-2 border-[#333]" />
            <p className="mt-[5px] text-center font-['Liberation_Sans',sans-serif] text-[19px] leading-6 text-[#333]">2 [m]</p>
        </div>
        <div className="relative ml-auto flex flex-col pt-[25px] pr-[13px]">
            <ViewToolbar />
            <div className="mt-5 flex justify-end">
                <PanelGrip className="mt-[163px] mr-[3px]" />
                <ScenePanel />
            </div>
            <div className="mt-auto flex flex-col"><OrientationCube /></div>
        </div>
    </main>
);

/* ---------- Taskbar ---------- */

const TaskIcon = ({ children }) => <svg viewBox="0 0 30 30" className="h-[30px] w-[30px]" aria-hidden="true">{children}</svg>;

const APPS = [
    { name: 'Task View', icon: <TaskIcon><path d="M5 6v4h12V6M5 25v-4h12v4M5 13h12v5H5zM22 6v5M22 16v9M21 12h3v2h-3z" fill="none" stroke="#fff" strokeWidth="1.200" /></TaskIcon> },
    { name: 'Microsoft Store', icon: <TaskIcon><path d="M9 9V2h12v7" fill="none" stroke="#d8d8d8" strokeWidth="2.500" /><path d="M1 8h28v21H1z" fill="#f2f2f2" /><path d="M9 13h5v5H9z" fill="#f25022" /><path d="M15 13h5v5h-5z" fill="#7fba00" /><path d="M9 19h5v5H9z" fill="#00a4ef" /><path d="M15 19h5v5h-5z" fill="#ffb900" /></TaskIcon> },
    { name: 'Edge', active: true, icon: <TaskIcon><circle cx="15" cy="15" r="14.500" fill="#1576c8" /><path d="M1 12C4-4 28-3 29.500 14C30 20 21 22 18 18C21 12 12 6 1 12Z" fill="#45cf9a" /><path d="M1 12C3 5 14 2 19 9C10 5 2 9 1 17Z" fill="#2aa7e6" /><path d="M10 18C11 26 20 28 27 23C21 32 5 31 3 20C5 12 10 11 15 13C12 13 10 15 10 18Z" fill="#0e4f9e" /></TaskIcon> },
    { name: 'Evernote', icon: <TaskIcon><rect x="1" y="1" width="28" height="28" rx="2" fill="#4f9f2c" /><rect x="3" y="3" width="24" height="24" rx="1" fill="#a4d97a" /><path d="M6 11h4V6c5-3 12-1 13 4 1 6 1 13-2 15-4 2-6-1-4-4h-1c-1 1-3 1-4-1-3 0-6-3-6-9z" fill="#3a3a3a" /><path d="M6 10l4-4v4z" fill="#3a3a3a" /><circle cx="20" cy="13" r="1.500" fill="#a4d97a" /></TaskIcon> },
    { name: 'Mail', icon: <TaskIcon><path d="M0 11L15 1L30 11V27H0Z" fill="#0f5fae" /><path d="M0 11H30V27H0Z" fill="#2a9df0" /><path d="M1 11H29L15 22Z" fill="#f4f9fd" /><path d="M0 27L15 19L30 27Z" fill="#4cc0fa" /></TaskIcon> },
    { name: 'Fusion 360', icon: <TaskIcon><path d="M0 0h30v30H0z" fill="#fbe3d2" /><path d="M9 4h13l-1 4h-7v5h6v4h-6v7l-5 2z" fill="#d9853f" /><path d="M9 4l3 3v17l-3 2z" fill="#a9571d" /></TaskIcon> },
    { name: 'File Explorer', icon: <TaskIcon><path d="M2 4h11l2 4H2z" fill="#d99c16" /><path d="M2 7h26v18H2z" fill="#fbd05e" /><path d="M6 26V15h18v11h-5v-5h-8v5z" fill="#3b97dd" /></TaskIcon> },
    { name: 'Firefox', icon: <TaskIcon><circle cx="15" cy="16" r="13.500" fill="#ff5a36" /><path d="M17 1c8 3 12 9 11 17-2 7-7 10-12 10 8-4 10-9 7-16z" fill="#ffc93a" /><circle cx="14" cy="15" r="7" fill="#7a3ff0" /><path d="M2 12l3-6 3 4 6 1c-3 1-5 3-4 6 1 4 6 5 9 3-3 7-14 5-15-3z" fill="#ff9a2a" /></TaskIcon> },
    { name: 'Sticky Notes', icon: <TaskIcon><path d="M2 2h26v16L18 28H2z" fill="#fddc0c" /><path d="M28 16v12H16c2-2 2-8 2-10z" fill="#4a4a40" /><path d="M18 28l10-10V28z" fill="#f0b90a" /></TaskIcon> },
    { name: 'Valorant', icon: <TaskIcon><path d="M2.500 2.500h25v25h-25z" fill="#10141f" stroke="#7c2230" /><path d="M8 10l7 10h-4l-3-4zM22 10v6l-3 4h-3z" fill="#ff4655" /></TaskIcon> },
    { name: 'Tripadvisor', icon: <TaskIcon><rect width="30" height="30" rx="5" fill="#589442" /><path d="M5 11c5-3 15-3 20 0" fill="none" stroke="#111" strokeWidth="2" /><circle cx="9.500" cy="16" r="5.200" fill="#fff" stroke="#111" strokeWidth="1.300" /><circle cx="20.500" cy="16" r="5.200" fill="#fff" stroke="#111" strokeWidth="1.300" /><circle cx="9.500" cy="16" r="2.300" fill="#d33" stroke="#111" /><circle cx="20.500" cy="16" r="2.300" fill="#3a3" stroke="#111" /><path d="M13 20l2 4 2-4z" fill="#f5c518" /></TaskIcon> },
    { name: 'Control Panel', open: true, icon: <TaskIcon><rect x="2" y="6" width="27" height="18" fill="#5bb8ef" /><rect x="4" y="8" width="23" height="14" fill="#d8effc" /><circle cx="11" cy="15" r="5" fill="#2a86d0" /><path d="M11 15V9a6 6 0 015 6z" fill="#f5a81c" /><path d="M19 10h6M19 13h6M19 16h6M19 19h6" stroke="#2a86d0" strokeWidth="1.500" /></TaskIcon> },
    { name: 'Downloader', open: true, icon: <TaskIcon><circle cx="6" cy="3" r="3" fill="#25c5c9" /><path d="M4 8l6 3v9l4 4V12c4-5 10-4 13-2 1 9-3 15-11 20-9-4-12-10-12-22z" fill="#2f8fc4" /><path d="M4 8l6 3v9l6 10c-9-4-12-10-12-22z" fill="#36b6d8" /><path d="M15 14l7-1c0 4-2 7-6 9z" fill="#3a4048" /></TaskIcon> },
    { name: 'Photos', open: true, icon: <TaskIcon><rect x="1" y="1" width="28" height="28" rx="2" fill="#2f93ea" /><path d="M1 26L12 10L28 29H3Q1 29 1 26Z" fill="#164a9c" /><circle cx="19" cy="8" r="2.800" fill="#fff" /></TaskIcon> },
    { name: 'Excel', open: true, icon: <TaskIcon><rect x="8" y="2" width="21" height="27" rx="1" fill="#21a366" /><path d="M8 15h21v14H8z" fill="#185c37" /><path d="M18 2h11v13H18z" fill="#33c481" /><rect x="1" y="8" width="15" height="15" rx="1" fill="#107c41" /><path d="M5.500 11.500l6 8M11.500 11.500l-6 8" stroke="#fff" strokeWidth="2" /></TaskIcon> },
];

const Taskbar = () => (
    <footer className="flex h-[50px] shrink-0 items-stretch bg-[linear-gradient(90deg,#3b3e46,#3c3e42_60%,#2f3641)] text-white">
        <button aria-label="Start" className="flex w-[60px] items-center justify-center"><FaWindows size={21} /></button>
        <label className="flex w-[430px] items-center border border-[#bdbdbd] bg-[#f2f2f2] pl-[13px] text-[#222]">
            <Search size={22} strokeWidth={1.5} className="-scale-x-100" />
            <input aria-label="Type here to search" placeholder="Type here to search" className="ml-[14px] min-w-0 flex-1 text-[18px] outline-none placeholder:text-[#333]" />
        </label>
        {APPS.map((app) => (
            <button key={app.name} aria-label={app.name} className={app.active ? 'flex w-[62px] flex-col items-center bg-[#5f6468]' : 'flex w-[62px] flex-col items-center'}>
                <span className="flex h-[47px] items-center">{app.icon}</span>
                {app.active && <span className="h-[3px] w-full bg-[#76b9ed]" />}
                {app.open && <span className="h-[3px] w-[51px] bg-[#76b9ed]" />}
            </button>
        ))}
        <div className="ml-auto flex items-center text-[14px]">
            <button aria-label="Help" className="relative mr-[5px]">
                <span className="flex h-7 w-7 items-center justify-center rounded-full border-2 border-white bg-[#1486d8] text-[20px] leading-6 font-bold">?</span>
                <span className="absolute -right-1 bottom-0 flex h-3 w-3 items-center justify-center rounded-full bg-[#f5a81c] text-[10px] font-bold">!</span>
            </button>
            <button aria-label="Show hidden icons" className="flex w-[30px] justify-center"><ChevronUp size={22} strokeWidth={1.4} /></button>
            <button aria-label="OneDrive" className="flex w-[30px] justify-center text-[#c9c9c9]"><CloudOff size={20} strokeWidth={1.5} fill="#8a8a8a" /></button>
            <button aria-label="Volume" className="flex w-[30px] justify-center"><Volume2 size={20} strokeWidth={1.3} /></button>
            <button aria-label="Updates" className="relative flex w-[30px] justify-center">
                <Square size={21} strokeWidth={1.3} />
                <RotateCw size={10} strokeWidth={2} className="absolute top-[5px]" />
                <span className="absolute right-0 -bottom-1 h-[10px] w-[10px] rounded-full bg-[#e81123]" />
            </button>
            <button aria-label="Airplane mode" className="flex w-[34px] justify-center"><Plane size={22} strokeWidth={1.3} className="rotate-45" /></button>
            <button aria-label="Pen" className="flex w-[34px] justify-center">
                <svg viewBox="0 0 20 20" className="h-5 w-5" fill="none" stroke="#fff" strokeWidth="1.300"><path d="M3 14c-3-4 7-3 5 1s-7 2-3-2L15 2c2-1 3 1 2 2L9 13M11 12c4-2 7 1 3 2" /></svg>
            </button>
            <span className="ml-[10px]">ENG</span>
            <p className="mr-[17px] ml-[15px] text-center leading-[23px]">1:23 AM<br />14/5/2021</p>
            <button aria-label="Notifications" className="relative mr-[24px] ml-[7px] h-8 w-7">
                <svg viewBox="0 0 22 22" className="h-[22px] w-[22px]"><path d="M1 1h20v15H14l-5 5v-5H1z" fill="#fff" /><path d="M5 5h12M5 8h12M5 11h12" stroke="#333" strokeWidth="1.200" /></svg>
                <span className="absolute right-0 bottom-0 flex h-[18px] w-[18px] items-center justify-center rounded-full border border-[#999] bg-[#2c3139] text-[14px]">2</span>
            </button>
            <span className="h-[50px] w-px bg-[#7b8088]" />
        </div>
    </footer>
);

const App = () => (
    <div className="flex h-screen flex-col overflow-hidden font-['Lato',sans-serif] leading-normal">
        <div className="font-['Open_Sans',sans-serif]">
            <TabBar />
            <AddressBar />
        </div>
        <AppHeader />
        <Workspace />
        <div className="font-['Open_Sans',sans-serif]">
            <Taskbar />
        </div>
    </div>
);

export default App;
